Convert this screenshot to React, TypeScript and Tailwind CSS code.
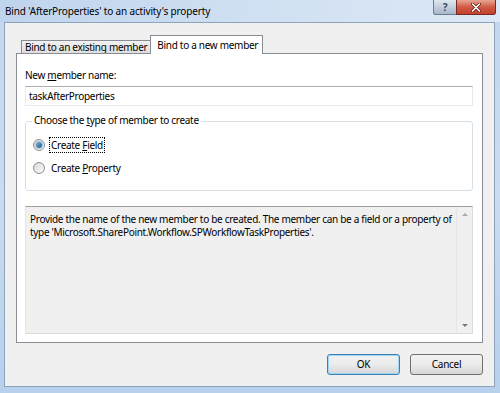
const font = { fontFamily: '"Noto Sans", "Open Sans", Arial, sans-serif' }

function Radio({ checked }: { checked: boolean }) {
  return (
    <span className="relative inline-flex h-[12px] w-[12px] shrink-0 items-center justify-center rounded-full border border-[#8e8f8f] bg-gradient-to-br from-[#d8d8d8] to-[#fbfbfb]">
      {checked && (
        <span className="h-[6px] w-[6px] rounded-full bg-gradient-to-br from-[#7fb4d9] to-[#1d5b8a] ring-1 ring-[#a5c7e3]" />
      )}
    </span>
  )
}

export default function App() {
  return (
    <div
      className="flex h-[393px] w-[500px] flex-col overflow-hidden bg-gradient-to-b from-[#c2d7ee] via-[#c9dcf1] to-[#b7d0ec] text-[10px] leading-[13px] tracking-[-0.3px] text-black"
      style={font}
    >
      {/* Title bar */}
      <div className="flex h-[22px] shrink-0 items-start bg-gradient-to-r from-[#bfd4ed] via-[#d0e0f2] to-[#dce8f5]">
        <span className="ml-[5px] mt-[5px] text-[10px] leading-[13px] tracking-[-0.15px] text-black">
          Bind 'AfterProperties' to an activity's property
        </span>
        <div className="ml-auto mr-[4px] flex">
          <div className="flex h-[15px] w-[23px] items-center justify-center rounded-bl-[3px] border border-r-0 border-t-0 border-[#6d7d93] bg-gradient-to-b from-[#dfe7f1] to-[#a8b8cc] text-[10px] font-bold leading-none text-[#3b4b60]">
            ?
          </div>
          <div className="flex h-[15px] w-[40px] items-center justify-center rounded-br-[3px] border border-t-0 border-[#7b2a22] bg-gradient-to-b from-[#e8a593] via-[#cf5a45] to-[#c2402c]">
            <svg width="10" height="9" viewBox="0 0 10 9">
              <path d="M1.5 1 L8.5 8 M8.5 1 L1.5 8" stroke="#5a1a12" strokeWidth="3" strokeLinecap="round" />
              <path d="M1.5 1 L8.5 8 M8.5 1 L1.5 8" stroke="#ffffff" strokeWidth="1.6" strokeLinecap="round" />
            </svg>
          </div>
        </div>
      </div>

      {/* Client area */}
      <div className="mb-[6px] ml-[4px] mr-[5px] flex flex-1 flex-col border border-[#8da2bb] bg-[#f0f0f0] px-[11px] pt-[12px]">
        {/* Tabs */}
        <div className="flex items-end pl-[5px]">
          <div className="-mr-[1px] flex h-[13px] items-center border border-b-0 border-[#898c95] bg-gradient-to-b from-[#f2f2f2] to-[#dedede] px-[3px] pb-[1px]">
            <span className="leading-[12px]">Bind to an existing member</span>
          </div>
          <div className="relative z-10 -mb-[1px] flex h-[19px] items-center border border-b-0 border-[#898c95] bg-white pl-[6px] pr-[4px]">
            Bind to a new member
          </div>
        </div>

        {/* Tab panel */}
        <div className="flex h-[290px] flex-col border border-[#898c95] bg-white pl-[8px] pr-[9px] pt-[15px]">
          <div className="h-[16px]">
            New <span className="underline">m</span>ember name:
          </div>
          <div className="mt-[1px] flex h-[20px] items-center border border-[#e3e9ef] border-t-[#abadb3] bg-white pl-[3px]">
            taskAfterProperties
          </div>

          {/* Group box */}
          <div className="relative mt-[15px] h-[70px] rounded-[3px] border border-[#d5dfe5] pt-[14px] pl-[7px]">
            <span className="absolute -top-[8px] left-[6px] bg-white px-[2px]">
              Choose the <span className="underline">t</span>ype of member to create
            </span>
            <div className="flex h-[18px] items-center gap-[4px]">
              <Radio checked />
              <span className="border border-dotted border-black px-[1px] leading-[14px]">
                Create <span className="underline">F</span>ield
              </span>
            </div>
            <div className="mt-[5px] flex h-[18px] items-center gap-[5px]">
              <Radio checked={false} />
              <span className="px-[1px]">
                Create <span className="underline">P</span>roperty
              </span>
            </div>
          </div>

          {/* Description */}
          <div className="mt-[15px] flex h-[128px] border border-[#dadada] border-t-[#a0a0a0] border-l-[#e6e6e6] bg-[#f0f0f0]">
            <p className="flex-1 pl-[4px] pt-[6px] leading-[12.5px]">
              Provide the name of the new member to be created. The member can be a field or a property of
              type 'Microsoft.SharePoint.Workflow.SPWorkflowTaskProperties'.
            </p>
            <div className="flex w-[16px] flex-col items-center justify-between border-l border-[#e6e6e6] py-[6px]">
              <span className="h-0 w-0 border-x-[3px] border-b-[3px] border-x-transparent border-b-[#a8a8a8]" />
              <span className="h-0 w-0 border-x-[3px] border-t-[3px] border-x-transparent border-t-[#7a7a7a]" />
            </div>
          </div>
        </div>

        {/* Buttons */}
        <div className="mt-[11px] flex justify-end gap-[10px]">
          <button className="h-[21px] w-[73px] rounded-[3px] border border-[#3c7fb1] bg-gradient-to-b from-[#f2f2f2] via-[#ebebeb] to-[#d6d6d6] shadow-[inset_0_0_0_1px_#9fd5f5]">
            OK
          </button>
          <button className="h-[21px] w-[73px] rounded-[3px] border border-[#707070] bg-gradient-to-b from-[#f2f2f2] via-[#ebebeb] to-[#d6d6d6]">
            Cancel
          </button>
        </div>
      </div>
    </div>
  )
}
